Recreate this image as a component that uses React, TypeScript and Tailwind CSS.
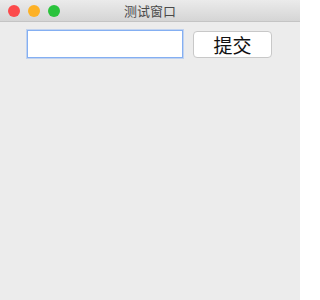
import React from "react";

export default function App() {
  return (
    <div className="w-[300px] h-[300px] bg-[#ececec] flex flex-col overflow-hidden" style={{ fontFamily: '"Noto Sans CJK SC", "Noto Sans", sans-serif' }}>
      <div className="relative h-[22px] shrink-0 bg-gradient-to-b from-[#ebebeb] to-[#d5d5d5] border-b border-[#c4c4c4] flex items-center justify-center">
        <div className="absolute left-[8px] top-[5px] flex gap-[8px]">
          <div className="w-[12px] h-[12px] rounded-full bg-[#fc4a4b]" />
          <div className="w-[12px] h-[12px] rounded-full bg-[#fdb125]" />
          <div className="w-[12px] h-[12px] rounded-full bg-[#2ac33c]" />
        </div>
        <span className="text-[13px] leading-none text-[#4a4a4a]">测试窗口</span>
      </div>
      <div className="flex items-start pl-[27px] pt-[8px]">
        <div className="w-[156px] h-[28px] bg-white border border-solid border-[#84aff2] shadow-[0_0_0_1px_rgba(140,180,245,0.45)]" />
        <button className="ml-[10px] mt-[1px] w-[79px] h-[27px] bg-white border border-[#c8c8c8] rounded-[4px] text-[19px] leading-none text-[#111] flex items-center justify-center">
          提交
        </button>
      </div>
    </div>
  );
}
